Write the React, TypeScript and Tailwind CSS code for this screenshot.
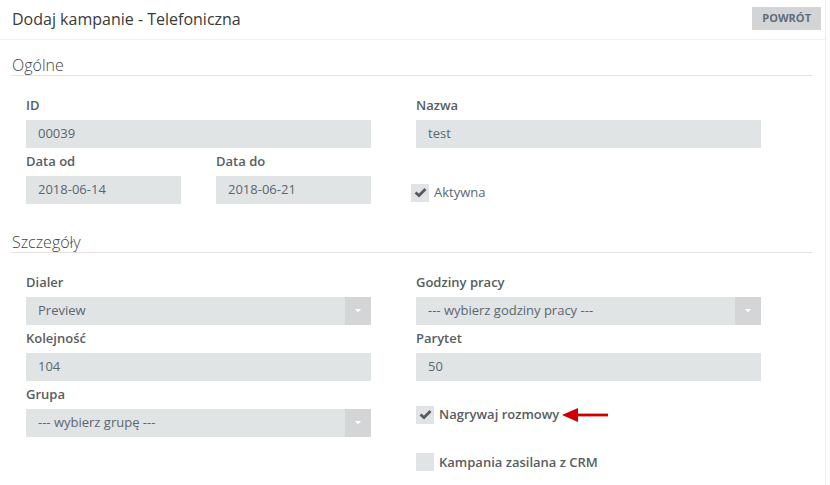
import React from "react";

const font = { fontFamily: '"Open Sans", "Liberation Sans", sans-serif' };

function Label({ children }: { children: React.ReactNode }) {
  return (
    <div className="h-7 flex items-center text-[13px] font-semibold text-[#575d63]">
      {children}
    </div>
  );
}

function Input({ value, width = "w-[345px]" }: { value: string; width?: string }) {
  return (
    <div className={`${width} h-7 bg-[#e1e4e5] flex items-center px-3 text-[13px] text-[#5b6770]`}>
      {value}
    </div>
  );
}

function Select({ value }: { value: string }) {
  return (
    <div className="w-[345px] h-7 bg-[#e1e4e5] flex items-center text-[13px] text-[#5b6770]">
      <span className="flex-1 px-3">{value}</span>
      <span className="w-[26px] h-full bg-[#d3d5d7] flex items-center justify-center">
        <svg width="8" height="4" viewBox="0 0 8 4">
          <path d="M1 0 L7 0 L4 3.5 Z" fill="#ffffff" />
        </svg>
      </span>
    </div>
  );
}

function Checkbox({ checked, label, bold }: { checked: boolean; label: string; bold?: boolean }) {
  return (
    <div className="flex items-center gap-[5px]">
      <span className="w-[18px] h-[18px] bg-[#e1e4e5] flex items-center justify-center">
        {checked && (
          <svg width="13" height="11" viewBox="0 0 13 11">
            <path d="M1.5 5.5 L5 8.6 L11.5 2" stroke="#545b62" strokeWidth="2.8" fill="none" />
          </svg>
        )}
      </span>
      <span className={`text-[13px] ${bold ? "font-semibold text-[#575d63]" : "text-[#5b6770]"}`}>{label}</span>
    </div>
  );
}

function SectionTitle({ children }: { children: React.ReactNode }) {
  return (
    <div className="ml-[11px] mr-[13px] border-b border-[#e3e3e3] h-[21px] flex items-center pl-px text-[16px] font-light text-[#444]">
      {children}
    </div>
  );
}

export default function App() {
  return (
    <div style={font} className="w-[830px] h-[485px] bg-white flex overflow-hidden">
      <div className="w-[826px] border-r border-[#ececec]">
        {/* header */}
        <div className="h-10 border-b border-[#f2f2f2] flex items-center justify-between pl-3 pr-[4px]">
          <div className="text-[16px] text-[#3a3a3a] -mt-[1px]">Dodaj kampanie - Telefoniczna</div>
          <button className="h-[23px] px-[10px] bg-[#d3d4d6] text-[11px] font-bold text-[#5f6e7a] -mt-[2px]">
            POWRÓT
          </button>
        </div>

        {/* Ogolne */}
        <div className="mt-[15px]">
          <SectionTitle>Ogólne</SectionTitle>
          <div className="pl-[26px] pt-4 flex gap-[45px]">
            <div className="w-[345px]">
              <Label>ID</Label>
              <Input value="00039" />
              <div className="flex gap-[35px]">
                <div>
                  <Label>Data od</Label>
                  <Input value="2018-06-14" width="w-[155px]" />
                </div>
                <div>
                  <Label>Data do</Label>
                  <Input value="2018-06-21" width="w-[155px]" />
                </div>
              </div>
            </div>
            <div className="w-[345px]">
              <Label>Nazwa</Label>
              <Input value="test" />
              <div className="mt-[35px] -ml-[5px]">
                <Checkbox checked label="Aktywna" />
              </div>
            </div>
          </div>
        </div>

        {/* Szczegoly */}
        <div className="mt-[28px]">
          <SectionTitle>Szczegóły</SectionTitle>
          <div className="pl-[26px] pt-4 flex gap-[45px]">
            <div className="w-[345px]">
              <Label>Dialer</Label>
              <Select value="Preview" />
              <Label>Kolejność</Label>
              <Input value="104" />
              <Label>Grupa</Label>
              <Select value="--- wybierz grupę ---" />
            </div>
            <div className="w-[345px]">
              <Label>Godziny pracy</Label>
              <Select value="--- wybierz godziny pracy ---" />
              <Label>Parytet</Label>
              <Input value="50" />
              <div className="mt-6 flex items-center">
                <Checkbox checked bold label="Nagrywaj rozmowy" />
                <svg width="48" height="16" viewBox="0 0 48 16" className="ml-[3px]">
                  <path d="M0 8 L16 1 L16 15 Z" fill="#cc0000" />
                  <rect x="14" y="6.6" width="32" height="2.8" fill="#cc0000" />
                </svg>
              </div>
              <div className="mt-[28px]">
                <Checkbox checked={false} bold label="Kampania zasilana z CRM" />
              </div>
            </div>
          </div>
        </div>
      </div>
    </div>
  );
}
